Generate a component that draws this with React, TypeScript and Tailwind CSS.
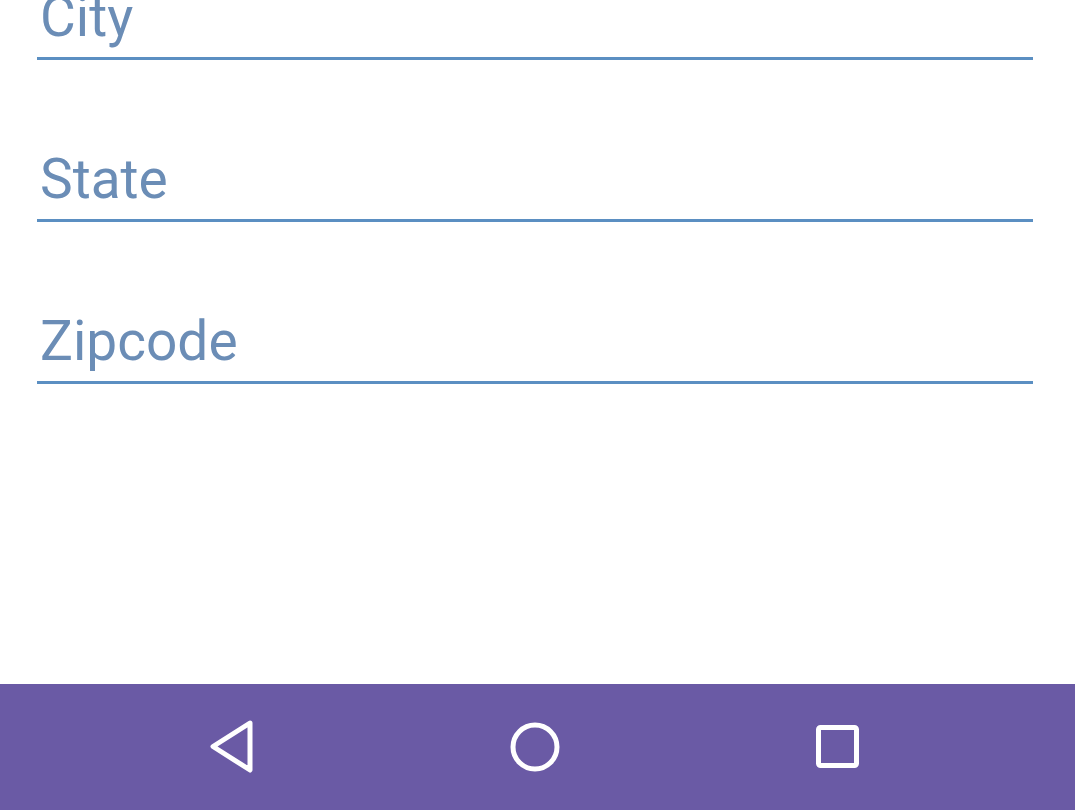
const fields = ['City', 'State', 'Zipcode'];

function BackIcon() {
  return (
    <svg width="48" height="56" viewBox="0 0 48 56" fill="none">
      <path d="M42 4 L5 27.5 L42 51 Z" stroke="#ffffff" strokeWidth="5" strokeLinejoin="round" />
    </svg>
  );
}

function HomeIcon() {
  return (
    <svg width="56" height="56" viewBox="0 0 56 56" fill="none">
      <circle cx="28" cy="28" r="22" stroke="#ffffff" strokeWidth="5" />
    </svg>
  );
}

function RecentsIcon() {
  return (
    <svg width="48" height="48" viewBox="0 0 48 48" fill="none">
      <rect x="4.5" y="4.5" width="38" height="38" rx="2" stroke="#ffffff" strokeWidth="5" />
    </svg>
  );
}

export default function App() {
  return (
    <div className="w-[1075px] h-[810px] bg-white flex flex-col overflow-hidden" style={{ fontFamily: 'Roboto, "Noto Sans", sans-serif' }}>
      {/* Form fields */}
      <div className="flex-1 pl-[37px] pr-[42px] mt-[-10px] flex flex-col gap-[92px]">
        {fields.map((f) => (
          <div key={f} className="border-b-[3px] border-[#5b8fc2] pb-[12px] pl-[3px]">
            <div className="text-[55px] leading-none text-[#6b8db6]">{f}</div>
          </div>
        ))}
      </div>

      {/* Navigation bar */}
      <div className="h-[126px] bg-[#6a5aa5] flex items-center justify-center pr-[5px]">
        <div className="w-[303px] flex justify-center pb-[1px]">
          <BackIcon />
        </div>
        <div className="w-[303px] flex justify-center">
          <HomeIcon />
        </div>
        <div className="w-[303px] flex justify-center">
          <RecentsIcon />
        </div>
      </div>
    </div>
  );
}
